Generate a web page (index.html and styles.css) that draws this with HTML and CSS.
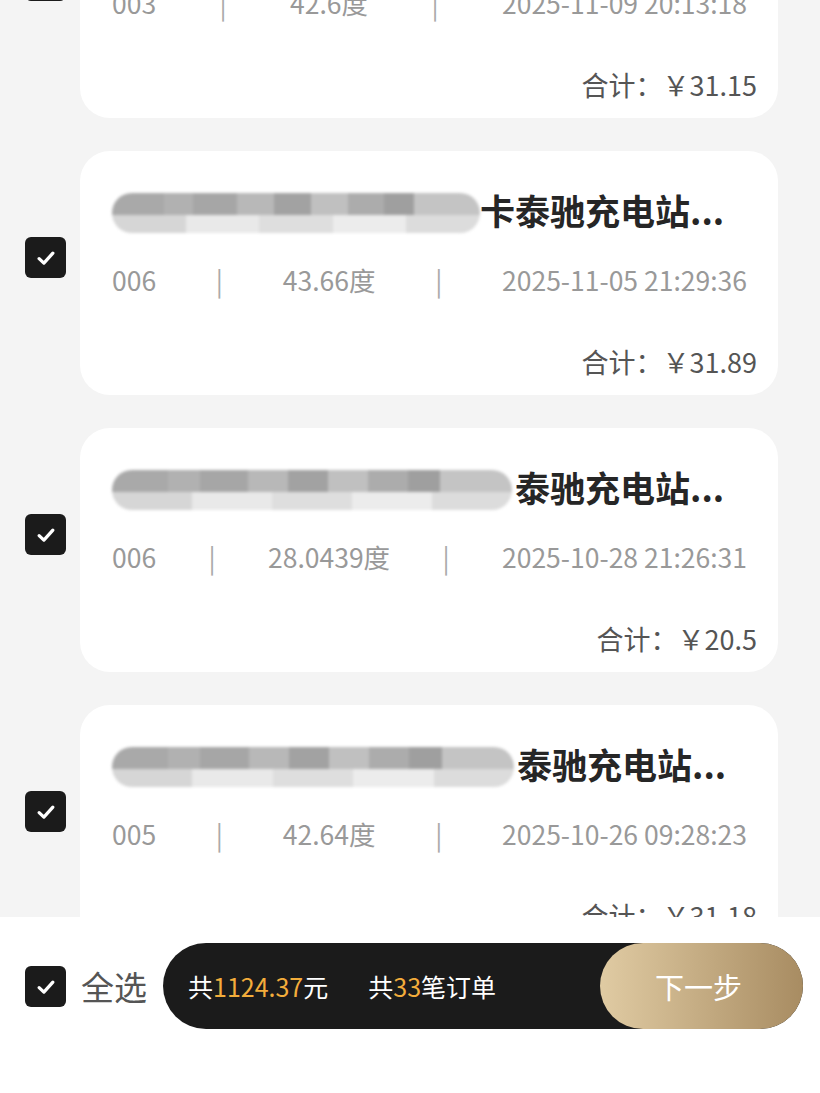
FILE: index.html
```html
<!DOCTYPE html>
<html lang="zh-CN">
<head>
  <meta charset="UTF-8" />
  <title>选择订单</title>
  <link rel="stylesheet" href="styles.css">
</head>
<body>

  <div class="list">

    <div class="row">
      <span class="check"><svg viewBox="0 0 24 24"><path d="M6.5 12.5l3.8 3.6 7.2-8"/></svg></span>
      <div class="card">
        <div class="title"><span class="mosaic m1"></span><span>卡泰驰充电站...</span></div>
        <div class="meta"><span>003</span><span class="sep">|</span><span>42.6度</span><span class="sep">|</span><span>2025-11-09 20:13:18</span></div>
        <div class="total">合计：￥31.15</div>
      </div>
    </div>

    <div class="row">
      <span class="check"><svg viewBox="0 0 24 24"><path d="M6.5 12.5l3.8 3.6 7.2-8"/></svg></span>
      <div class="card">
        <div class="title"><span class="mosaic m1"></span><span>卡泰驰充电站...</span></div>
        <div class="meta"><span>006</span><span class="sep">|</span><span>43.66度</span><span class="sep">|</span><span>2025-11-05 21:29:36</span></div>
        <div class="total">合计：￥31.89</div>
      </div>
    </div>

    <div class="row">
      <span class="check"><svg viewBox="0 0 24 24"><path d="M6.5 12.5l3.8 3.6 7.2-8"/></svg></span>
      <div class="card">
        <div class="title"><span class="mosaic m2"></span><span>泰驰充电站...</span></div>
        <div class="meta"><span>006</span><span class="sep">|</span><span>28.0439度</span><span class="sep">|</span><span>2025-10-28 21:26:31</span></div>
        <div class="total">合计：￥20.5</div>
      </div>
    </div>

    <div class="row">
      <span class="check"><svg viewBox="0 0 24 24"><path d="M6.5 12.5l3.8 3.6 7.2-8"/></svg></span>
      <div class="card">
        <div class="title"><span class="mosaic m3"></span><span>泰驰充电站...</span></div>
        <div class="meta"><span>005</span><span class="sep">|</span><span>42.64度</span><span class="sep">|</span><span>2025-10-26 09:28:23</span></div>
        <div class="total">合计：￥31.18</div>
      </div>
    </div>

  </div>

  <div class="footer">
    <span class="check"><svg viewBox="0 0 24 24"><path d="M6.5 12.5l3.8 3.6 7.2-8"/></svg></span>
    <span class="all">全选</span>
    <div class="pill">
      <div class="sum">
        <span>共<em>1124.37</em>元</span>
        <span>共<em>33</em>笔订单</span>
      </div>
      <button class="next">下一步</button>
    </div>
  </div>

</body>
</html>
```

FILE: styles.css
```css
body {
  margin: 0;
  background: #f4f4f4;
  font-family: "Noto Sans CJK SC", "Liberation Sans", sans-serif;
  overflow: hidden;
  height: 1093px;
}
.list {
  margin-top: -126px;
  padding: 0 42px 0 25px;
  display: flex;
  flex-direction: column;
  gap: 33px;
}
.row {
  display: flex;
  align-items: flex-start;
  gap: 14px;
}
.check {
  flex: none;
  width: 41px;
  height: 41px;
  background: #1b1b1b;
  border-radius: 6px;
  display: flex;
  align-items: center;
  justify-content: center;
}
.row .check {
  margin-top: 86px;
}
.check svg {
  width: 30px;
  height: 30px;
  fill: none;
  stroke: #fff;
  stroke-width: 2.6;
  stroke-linecap: round;
  stroke-linejoin: round;
}
.card {
  flex: 1;
  background: white;
  border-radius: 30px;
  padding: 39px 21px 15px 32px;
}
.title {
  display: flex;
  align-items: center;
  height: 38px;
  font-size: 35px;
  font-weight: bold;
  color: #262626;
  white-space: nowrap;
}
.mosaic {
  flex: none;
  height: 40px;
  margin-top: 8px;
  border-radius: 20px;
  filter: blur(1.5px);
  background:
    linear-gradient(90deg, #a9a9a9 0 14%, #b1b1b1 14% 22%, #a6a6a6 22% 34%, #b8b8b8 34% 44%, #a2a2a2 44% 54%, #c0c0c0 54% 64%, #acacac 64% 74%, #9f9f9f 74% 82%, #c4c4c4 82% 100%) top / 100% 55% no-repeat,
    linear-gradient(90deg, #d6d6d6 0 20%, #e9e9e9 20% 40%, #dedede 40% 60%, #ececec 60% 80%, #dcdcdc 80% 100%) bottom / 100% 45% no-repeat;
}
.m1 { width: 368px; margin-right: 0; }
.m2 { width: 400px; margin-right: 3px; }
.m3 { width: 402px; margin-right: 3px; }
.meta {
  display: flex;
  justify-content: space-between;
  margin: 34px 10px 0 0;
  line-height: 36px;
  font-size: 26.5px;
  color: #999;
}
.sep {
  color: #aaa;
}
.total {
  margin-top: 46px;
  line-height: 36px;
  text-align: right;
  font-size: 27px;
  color: #555;
}
.footer {
  position: fixed;
  left: 0;
  right: 0;
  bottom: 0;
  height: 176px;
  box-sizing: border-box;
  background: white;
  padding: 26px 17px 0 25px;
  display: flex;
  align-items: flex-start;
}
.footer .check {
  margin-top: 23px;
}
.all {
  margin: 20px 16px 0 15px;
  font-size: 33px;
  line-height: 46px;
  color: #555;
}
.pill {
  flex: 1;
  height: 86px;
  background: #1b1b1b;
  border-radius: 43px;
  display: flex;
  align-items: center;
}
.sum {
  flex: 1;
  display: flex;
  gap: 40px;
  padding-left: 25px;
  font-size: 25px;
  color: white;
}
.sum em {
  font-style: normal;
  color: #f3ad3b;
}
.next {
  width: 203px;
  height: 86px;
  border: none;
  border-radius: 43px;
  background: linear-gradient(90deg, #e0cba3, #a88c62);
  color: white;
  font-family: inherit;
  font-size: 29px;
  padding-right: 12px;
}
```
